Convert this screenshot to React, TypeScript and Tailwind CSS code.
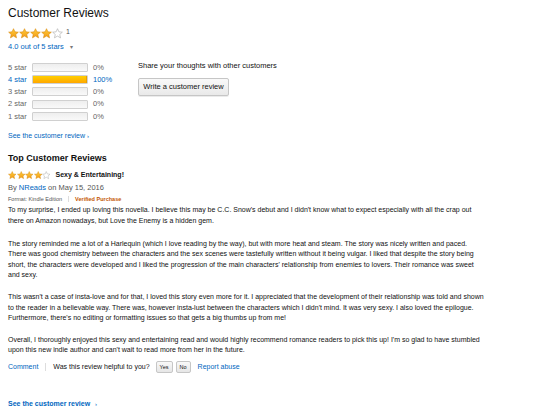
import React from "react";

const Star = ({ filled, size }: { filled: boolean; size: number }) => (
  <svg width={size} height={size} viewBox="0 0 24 24" className="block">
    <defs>
      <linearGradient id="sg" x1="0" y1="0" x2="0" y2="1">
        <stop offset="0" stopColor="#ffce3a" />
        <stop offset="1" stopColor="#f39a16" />
      </linearGradient>
    </defs>
    <polygon
      points="12,1.5 15.1,8.4 22.6,9.1 16.9,14.1 18.6,21.5 12,17.6 5.4,21.5 7.1,14.1 1.4,9.1 8.9,8.4"
      fill={filled ? "url(#sg)" : "#ffffff"}
      stroke={filled ? "#d88a10" : "#a8a8a8"}
      strokeWidth="1.3"
      strokeLinejoin="round"
    />
  </svg>
);

const Stars = ({ size }: { size: number }) => (
  <div className="flex items-center">
    <Star filled size={size} />
    <Star filled size={size} />
    <Star filled size={size} />
    <Star filled size={size} />
    <Star filled={false} size={size} />
  </div>
);

const rows = [
  { label: "5 star", pct: 0 },
  { label: "4 star", pct: 100 },
  { label: "3 star", pct: 0 },
  { label: "2 star", pct: 0 },
  { label: "1 star", pct: 0 },
];

export default function App() {
  return (
    <div className="w-[540px] h-[411px] bg-white text-[#111] px-[8px] pt-[6px] font-['Liberation_Sans',Arial,sans-serif] overflow-hidden">
      <div className="text-[12px] leading-[14px] text-[#111]">Customer Reviews</div>

      <div className="flex items-center mt-[8px] h-[11px]">
        <Stars size={11} />
        <span className="text-[7px] text-[#555] ml-[3px] -mt-[2px]">1</span>
      </div>

      <div className="flex items-center mt-[3px] text-[7.5px] leading-[10px] text-[#0066c0]">
        <span>4.0 out of 5 stars</span>
        <span className="ml-[6px] text-[#777] text-[6px]">▾</span>
      </div>

      <div className="flex mt-[9px]">
        <div className="w-[130px] flex flex-col">
          {rows.map((r) => (
            <div key={r.label} className="flex items-center h-[12.3px] text-[7.5px]">
              <span className={`w-[24px] ${r.pct ? "text-[#0066c0]" : "text-[#666]"}`}>{r.label}</span>
              <div className="w-[56px] h-[9px] border border-[#d0d0d0] bg-gradient-to-b from-[#eeeeee] to-[#f9f9f9] rounded-[1px] overflow-hidden">
                {r.pct > 0 && (
                  <div className="h-full bg-gradient-to-b from-[#ffce00] to-[#ffa700] border-r border-[#e8a000]" style={{ width: `${r.pct}%` }} />
                )}
              </div>
              <span className={`ml-[5px] ${r.pct ? "text-[#0066c0]" : "text-[#666]"}`}>{r.pct}%</span>
            </div>
          ))}
        </div>
        <div className="flex flex-col items-start">
          <div className="text-[7.5px] leading-[10px] text-[#111]">Share your thoughts with other customers</div>
          <button className="mt-[7px] w-[91px] h-[18px] border border-[#c6c6c6] rounded-[2px] bg-gradient-to-b from-[#f9f9f9] to-[#e9e9e9] text-[7.5px] text-[#111] shadow-[0_1px_0_rgba(0,0,0,0.08)]">
            Write a customer review
          </button>
        </div>
      </div>

      <div className="mt-[9px] text-[7px] leading-[10px] text-[#0066c0]">
        See the customer review <span className="text-[6px]">›</span>
      </div>

      <div className="mt-[11px] text-[9px] leading-[12px] font-bold text-[#111]">Top Customer Reviews</div>

      <div className="flex items-center mt-[6px] h-[10px]">
        <Stars size={8.5} />
        <span className="ml-[5px] text-[7px] font-bold text-[#111]">Sexy &amp; Entertaining!</span>
      </div>

      <div className="mt-[2px] text-[7.5px] leading-[11px] text-[#555]">
        By <span className="text-[#0066c0]">NReads</span> on May 15, 2016
      </div>

      <div className="mt-[1px] flex items-center text-[5.5px] leading-[10px] text-[#555]">
        <span>Format: Kindle Edition</span>
        <span className="mx-[6px] w-px h-[6px] bg-[#ddd]" />
        <span className="text-[#c45500] font-bold">Verified Purchase</span>
      </div>

      <div className="mt-[1px] text-[7px] leading-[10.3px] text-[#111]">
        <p>
          To my surprise, I ended up loving this novella. I believe this may be C.C. Snow's debut and I didn't know what to expect especially with all the crap out
          <br />
          there on Amazon nowadays, but Love the Enemy is a hidden gem.
        </p>
        <p className="mt-[13px]">
          The story reminded me a lot of a Harlequin (which I love reading by the way), but with more heat and steam. The story was nicely written and paced.
          <br />
          There was good chemistry between the characters and the sex scenes were tastefully written without it being vulgar. I liked that despite the story being
          <br />
          short, the characters were developed and I liked the progression of the main characters' relationship from enemies to lovers. Their romance was sweet
          <br />
          and sexy.
        </p>
        <p className="mt-[12px]">
          This wasn't a case of insta-love and for that, I loved this story even more for it. I appreciated that the development of their relationship was told and shown
          <br />
          to the reader in a believable way. There was, however insta-lust between the characters which I didn't mind. It was very sexy. I also loved the epilogue.
          <br />
          Furthermore, there's no editing or formatting issues so that gets a big thumbs up from me!
        </p>
        <p className="mt-[12px]">
          Overall, I thoroughly enjoyed this sexy and entertaining read and would highly recommend romance readers to pick this up! I'm so glad to have stumbled
          <br />
          upon this new indie author and can't wait to read more from her in the future.
        </p>
      </div>

      <div className="mt-[5px] flex items-center text-[7px] h-[13px]">
        <span className="text-[#0066c0]">Comment</span>
        <span className="mx-[7px] w-px h-[8px] bg-[#ddd]" />
        <span className="text-[#111]">Was this review helpful to you?</span>
        <button className="ml-[6px] h-[12px] px-[3px] border border-[#c6c6c6] rounded-[2px] bg-gradient-to-b from-[#f9f9f9] to-[#e6e6e6] text-[5.5px] text-[#111]">Yes</button>
        <button className="ml-[3px] h-[12px] px-[3px] border border-[#c6c6c6] rounded-[2px] bg-gradient-to-b from-[#f9f9f9] to-[#e6e6e6] text-[5.5px] text-[#111]">No</button>
        <span className="ml-[7px] text-[#0066c0]">Report abuse</span>
      </div>

      <div className="mt-[25px] text-[7px] leading-[10px] font-bold text-[#0066c0]">
        See the customer review <span className="ml-[3px] text-[6px] font-normal">›</span>
      </div>
    </div>
  );
}
